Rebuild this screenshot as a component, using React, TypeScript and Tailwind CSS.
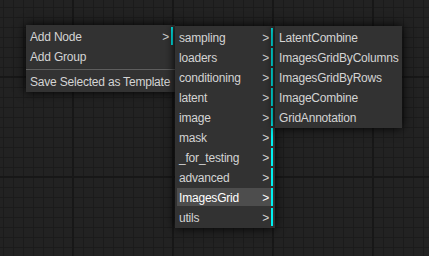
type Entry = {
  label: string;
  submenu?: boolean;
  active?: boolean;
  separator?: boolean;
};

const rootMenu: Entry[] = [
  { label: "Add Node", submenu: true },
  { label: "Add Group" },
  { label: "", separator: true },
  { label: "Save Selected as Template" },
];

const categories: Entry[] = [
  "sampling",
  "loaders",
  "conditioning",
  "latent",
  "image",
  "mask",
  "_for_testing",
  "advanced",
  "ImagesGrid",
  "utils",
].map((label) => ({ label, submenu: true, active: label === "ImagesGrid" }));

const nodes: Entry[] = [
  "LatentCombine",
  "ImagesGridByColumns",
  "ImagesGridByRows",
  "ImageCombine",
  "GridAnnotation",
].map((label) => ({ label }));

function MenuEntry({ entry }: { entry: Entry }) {
  if (entry.separator) {
    return <div className="mt-[3px] mb-[2px] h-0 border-t border-b border-t-[#303030] border-b-[#5e5e5e]" />;
  }
  return (
    <div
      className={`relative m-[2px] px-[2px] pt-[3px] pb-[1px] leading-[14px] whitespace-nowrap ${
        entry.submenu ? "pr-5 border-r-2 border-[#00f0f0]" : ""
      } ${entry.active ? "bg-[#4d4d4d] text-white" : "text-[#d4d4d4]"}`}
    >
      {entry.label}
      {entry.submenu && <span className="absolute top-[3px] right-[2px]">&gt;</span>}
    </div>
  );
}

function ContextMenu({ entries, className }: { entries: Entry[]; className: string }) {
  return (
    <div className={`absolute bg-[#323232] shadow-[0_0_10px_black] ${className}`}>
      {/* flow-root keeps the first/last entry margins inside the menu box */}
      <div className="flow-root">
        {entries.map((e, i) => (
          <MenuEntry key={i} entry={e} />
        ))}
      </div>
    </div>
  );
}

export default function App() {
  return (
    <div
      className="relative w-[429px] h-[256px] overflow-hidden bg-[#222222] text-[12px] tracking-[-0.2px] [font-family:'Liberation_Sans',Arial,sans-serif] [background-image:linear-gradient(to_right,#171717_2px,transparent_2px),linear-gradient(to_bottom,#171717_2px,transparent_2px),linear-gradient(to_right,#1b1b1b_1px,transparent_1px),linear-gradient(to_bottom,#1b1b1b_1px,transparent_1px)] [background-size:100px_100px,100px_100px,10px_10px,10px_10px] [background-position:72px_76px,72px_76px,3px_7px,3px_7px]"
    >
      <ContextMenu entries={rootMenu} className="left-[26px] top-[25px] w-[149px] z-10" />
      <ContextMenu entries={categories} className="left-[175px] top-[26px] w-[100px] z-20" />
      <ContextMenu entries={nodes} className="left-[275px] top-[26px] w-[127px] z-30" />
    </div>
  );
}
